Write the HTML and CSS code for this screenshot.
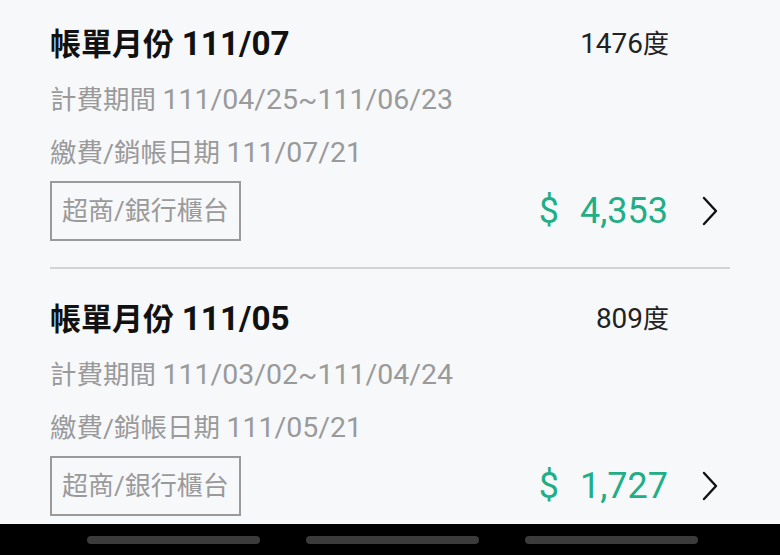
FILE: index.html
```
<!DOCTYPE html>
<html lang="zh-Hant">
<head>
<meta charset="utf-8">
<link rel="stylesheet" href="styles.css">
</head>
<body>
<div class="screen">
  <div class="scroll">
    <div class="list">
      <div class="bill">
        <div class="bill-top">
          <div class="bill-title">帳單月份 <span class="num">111/07</span></div>
          <div class="bill-usage"><span class="num">1476</span>度</div>
        </div>
        <div class="bill-info">計費期間 <span class="num">111/04/25~111/06/23</span></div>
        <div class="bill-info">繳費/銷帳日期 <span class="num">111/07/21</span></div>
        <div class="bill-bottom">
          <div class="pay-tag">超商/銀行櫃台</div>
          <div class="amount"><span class="currency">$</span><span class="value">4,353</span></div>
          <svg class="chevron" viewBox="0 0 16 30" width="16" height="30"><path d="M2 2 L14 15 L2 28" fill="none" stroke="#111" stroke-width="2.4" stroke-linecap="round" stroke-linejoin="round"/></svg>
        </div>
      </div>
      <div class="divider"></div>
      <div class="bill">
        <div class="bill-top">
          <div class="bill-title">帳單月份 <span class="num">111/05</span></div>
          <div class="bill-usage"><span class="num">809</span>度</div>
        </div>
        <div class="bill-info">計費期間 <span class="num">111/03/02~111/04/24</span></div>
        <div class="bill-info">繳費/銷帳日期 <span class="num">111/05/21</span></div>
        <div class="bill-bottom">
          <div class="pay-tag">超商/銀行櫃台</div>
          <div class="amount"><span class="currency">$</span><span class="value">1,727</span></div>
          <svg class="chevron" viewBox="0 0 16 30" width="16" height="30"><path d="M2 2 L14 15 L2 28" fill="none" stroke="#111" stroke-width="2.4" stroke-linecap="round" stroke-linejoin="round"/></svg>
        </div>
      </div>
    </div>
  </div>
  <div class="navbar">
    <span class="nav-pill"></span>
    <span class="nav-pill"></span>
    <span class="nav-pill"></span>
  </div>
</div>
</body>
</html>
```
FILE: styles.css
```
html, body {
  margin: 0;
  padding: 0;
  background: #f7f8fa;
}
body {
  font-family: "Roboto", "Noto Sans CJK TC", sans-serif;
}
.screen {
  width: 780px;
  height: 555px;
  display: flex;
  flex-direction: column;
  overflow: hidden;
}
.scroll {
  flex: 1;
  overflow: hidden;
  background: #f7f8fa;
}
.list {
  margin-top: -6px;
  padding: 0 50px;
}
.bill {
  padding-top: 30px;
  padding-bottom: 26px;
}
.bill-top {
  display: flex;
  align-items: center;
  justify-content: space-between;
  height: 40px;
  padding-right: 61px;
  margin-bottom: 9px;
}
.num {
  font-size: 1.075em;
}
.bill-title {
  font-size: 31px;
  font-weight: 700;
  color: #111;
  line-height: 40px;
}
.bill-usage {
  font-size: 26px;
  color: #222;
  line-height: 40px;
}
.bill-info {
  font-size: 26.5px;
  color: #9a9a9a;
  line-height: 53px;
  height: 53px;
  white-space: nowrap;
}
.bill-bottom {
  margin-top: 2px;
  display: flex;
  align-items: center;
  height: 60px;
}
.pay-tag {
  box-sizing: border-box;
  height: 60px;
  border: 2px solid #9a9a9a;
  padding: 0 10px;
  font-size: 26px;
  line-height: 56px;
  color: #9a9a9a;
}
.amount {
  margin-left: auto;
  display: flex;
  align-items: center;
  color: #1fae86;
  font-size: 36px;
  line-height: 60px;
}
.currency {
  margin-right: 21px;
}
.chevron {
  margin-left: 34px;
  margin-right: 12px;
  display: block;
}
.divider {
  height: 2px;
  background: #d3d3d3;
}
.navbar {
  height: 31px;
  flex: 0 0 31px;
  background: #000;
  display: flex;
  justify-content: center;
  align-items: center;
  gap: 46px;
  padding-left: 4px;
}
.nav-pill {
  display: block;
  width: 173px;
  height: 8px;
  border-radius: 4px;
  background: #3b3b3b;
}
```
